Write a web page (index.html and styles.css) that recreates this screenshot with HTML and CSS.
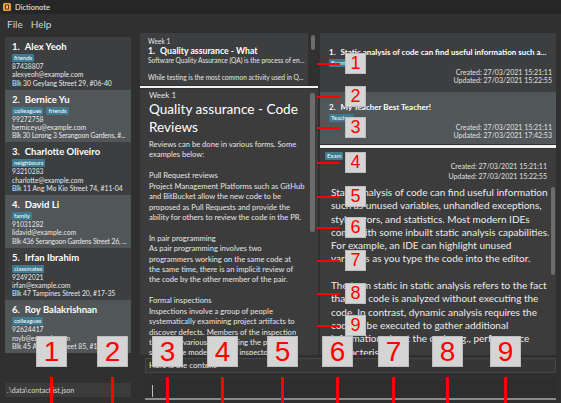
FILE: index.html
```html
<!DOCTYPE html>
<html>
<head>
<meta charset="utf-8">
<title>Dictionote</title>
<link rel="stylesheet" href="styles.css">
</head>
<body>
<div class="window">
  <header class="titlebar">
    <svg class="app-icon" width="8" height="8" viewBox="0 0 8 8"><rect x="0" y="0" width="8" height="8" rx="1.5" fill="#f0a030"/><rect x="2" y="1.5" width="4" height="5" rx="0.5" fill="#5a3a10"/><rect x="3" y="2.5" width="2" height="3" fill="#f0c060"/></svg>
    <span class="app-name">Dictionote</span>
  </header>
  <nav class="menubar"><span>File</span><span>Help</span></nav>
  <main class="main">
    <section class="contacts">
      <ul class="contact-list">
        <li class="contact">
          <div class="c-name"><span class="idx">1.</span>Alex Yeoh</div>
          <div class="tags"><span class="tag">friends</span></div>
          <div class="c-line">87438807</div>
          <div class="c-line">alexyeoh@example.com</div>
          <div class="c-line">Blk 30 Geylang Street 29, #06-40</div>
        </li>
        <li class="contact odd">
          <div class="c-name"><span class="idx">2.</span>Bernice Yu</div>
          <div class="tags"><span class="tag">colleagues</span><span class="tag">friends</span></div>
          <div class="c-line">99272758</div>
          <div class="c-line">berniceyu@example.com</div>
          <div class="c-line tight">Blk 30 Lorong 3 Serangoon Gardens, #...</div>
        </li>
        <li class="contact">
          <div class="c-name"><span class="idx">3.</span>Charlotte Oliveiro</div>
          <div class="tags"><span class="tag">neighbours</span></div>
          <div class="c-line">93210283</div>
          <div class="c-line">charlotte@example.com</div>
          <div class="c-line">Blk 11 Ang Mo Kio Street 74, #11-04</div>
        </li>
        <li class="contact odd">
          <div class="c-name"><span class="idx">4.</span>David Li</div>
          <div class="tags"><span class="tag">family</span></div>
          <div class="c-line">91031282</div>
          <div class="c-line">lidavid@example.com</div>
          <div class="c-line tight">Blk 436 Serangoon Gardens Street 26, ...</div>
        </li>
        <li class="contact">
          <div class="c-name"><span class="idx">5.</span>Irfan Ibrahim</div>
          <div class="tags"><span class="tag">classmates</span></div>
          <div class="c-line">92492021</div>
          <div class="c-line">irfan@example.com</div>
          <div class="c-line">Blk 47 Tampines Street 20, #17-35</div>
        </li>
        <li class="contact odd">
          <div class="c-name"><span class="idx">6.</span>Roy Balakrishnan</div>
          <div class="tags"><span class="tag">colleagues</span></div>
          <div class="c-line">92624417</div>
          <div class="c-line">royb@example.com</div>
          <div class="c-line">Blk 45 Aljunied Street 85, #11-31</div>
        </li>
      </ul>
      <div class="path">.\data\contactlist.json</div>
    </section>

    <section class="workspace">
      <div class="panes">
        <div class="notes-col">
          <div class="note-list">
            <div class="note-card">
              <div class="n-small">Week 1</div>
              <div class="n-title"><span class="idx">1.</span>Quality assurance - What</div>
              <div class="n-small">Software Quality Assurance (QA) is the process of en...</div>
              <div class="n-small">&nbsp;</div>
              <div class="n-small">While testing is the most common activity used in Q...</div>
            </div>
            <div class="scroll-track"><div class="thumb thumb-list"></div></div>
          </div>
          <div class="divider"></div>
          <div class="note-view">
            <div class="note-text">
              <div class="nv-week">Week 1</div>
              <h1 class="nv-title">Quality assurance - Code<br>Reviews</h1>
              <p class="nv-body">Reviews can be done in various forms. Some<br>examples below:<br><br>Pull Request reviews<br>Project Management Platforms such as GitHub<br>and BitBucket allow the new code to be<br>proposed as Pull Requests and provide the<br>ability for others to review the code in the PR.<br><br>In pair programming<br>As pair programming involves two<br>programmers working on the same code at<br>the same time, there is an implicit review of<br>the code by the other member of the pair.<br><br>Formal inspections<br>Inspections involve a group of people<br>systematically examining project artifacts to<br>discover defects. Members of the inspection<br>team play various roles during the process,<br>such as the moderator, the inspector, the</p>
            </div>
            <div class="scroll-track"><div class="thumb thumb-view"></div></div>
          </div>
        </div>

        <div class="detail-col">
          <div class="detail-list">
            <div class="d-card first">
              <div class="d-title"><span class="idx">1.</span>Static analysis of code can find useful information such a...</div>
              <div class="tags"><span class="tag">Exam</span></div>
              <div class="d-date">Created: 27/03/2021 15:21:11</div>
              <div class="d-date">Updated: 27/03/2021 15:22:55</div>
            </div>
            <div class="d-card odd">
              <div class="d-title"><span class="idx">2.</span>My Teacher Best Teacher!</div>
              <div class="tags"><span class="tag">Teacher</span></div>
              <div class="d-date">Created: 27/03/2021 15:21:11</div>
              <div class="d-date">Updated: 27/03/2021 17:42:53</div>
            </div>
          </div>
          <div class="divider thick"></div>
          <div class="detail-view">
            <div class="dv-head">
              <div class="tags"><span class="tag">Exam</span></div>
              <div class="dv-date">Created: 27/03/2021 15:21:11</div>
              <div class="dv-date">Updated: 27/03/2021 15:22:55</div>
            </div>
            <div class="dv-body">
              <p class="dv-text">Static analysis of code can find useful information<br>such as unused variables, unhandled exceptions,<br>style errors, and statistics. Most modern IDEs<br>come with some inbuilt static analysis capabilities.<br>For example, an IDE can highlight unused<br>variables as you type the code into the editor.<br><br>The term static in static analysis refers to the fact<br>that the code is analyzed without executing the<br>code. In contrast, dynamic analysis requires the<br>code to be executed to gather additional<br>information about the code e.g., performance<br>characteristics.</p>
              <div class="scroll-track slim"><div class="thumb thumb-detail"></div></div>
            </div>
          </div>
        </div>
      </div>
      <div class="result">Here is the content</div>
      <div class="command"><span class="caret"></span></div>
    </section>
  </main>

  <div class="marks">
    <div class="rmark r1"><span class="rline"></span><span class="rbox">1</span></div>
    <div class="rmark r2"><span class="rline"></span><span class="rbox">2</span></div>
    <div class="rmark r3"><span class="rline"></span><span class="rbox">3</span></div>
    <div class="rmark r4"><span class="rline"></span><span class="rbox">4</span></div>
    <div class="rmark r5"><span class="rline"></span><span class="rbox">5</span></div>
    <div class="rmark r6"><span class="rline"></span><span class="rbox">6</span></div>
    <div class="rmark r7"><span class="rline"></span><span class="rbox">7</span></div>
    <div class="rmark r8"><span class="rline"></span><span class="rbox">8</span></div>
    <div class="rmark r9"><span class="rline"></span><span class="rbox">9</span></div>

    <div class="bmark b1"><span class="bbox">1</span><span class="bline"></span></div>
    <div class="bmark b2"><span class="bbox">2</span><span class="bline"></span></div>
    <div class="bmark b3"><span class="bbox">3</span><span class="bline"></span></div>
    <div class="bmark b4"><span class="bbox">4</span><span class="bline"></span></div>
    <div class="bmark b5"><span class="bbox">5</span><span class="bline"></span></div>
    <div class="bmark b6"><span class="bbox">6</span><span class="bline"></span></div>
    <div class="bmark b7"><span class="bbox">7</span><span class="bline"></span></div>
    <div class="bmark b8"><span class="bbox">8</span><span class="bline"></span></div>
    <div class="bmark b9"><span class="bbox">9</span><span class="bline"></span></div>
  </div>
</div>
</body>
</html>
```

FILE: styles.css
```css
* { box-sizing: border-box; margin: 0; padding: 0; }
html, body { width: 561px; height: 403px; overflow: hidden; }
body {
  background: #303030;
  font-family: "Lato", "Open Sans", sans-serif;
  color: #e6e6e6;
}
.window { position: relative; width: 561px; height: 403px; }

.titlebar {
  height: 14px;
  background: #262626;
  display: flex;
  align-items: center;
  gap: 4px;
  padding-left: 3px;
  font-size: 7.5px;
  color: #f2f2f2;
}
.app-icon { display: block; }

.menubar {
  height: 19px;
  display: flex;
  align-items: center;
  gap: 8px;
  padding-left: 7px;
  font-size: 10px;
  color: #d0d0d0;
}

.main { display: flex; height: 370px; }

/* contacts */
.contacts {
  width: 131px;
  padding-left: 5px;
  padding-top: 4px;
  display: flex;
  flex-direction: column;
}
.contact-list { list-style: none; }
.contact {
  height: 52.67px;
  padding: 3px 2px 0 7px;
  background: #3c3e3f;
  overflow: hidden;
}
.contact.odd { background: #515658; }
.c-name {
  font-size: 9.5px;
  font-weight: 700;
  line-height: 13px;
  color: #ffffff;
  white-space: nowrap;
}
.idx { margin-right: 5px; }
.tags { display: flex; gap: 3px; margin-top: 1px; height: 8px; }
.tag {
  background: #3e7b91;
  color: #ffffff;
  font-size: 6px;
  line-height: 8px;
  padding: 0 2px;
  border-radius: 1px;
}
.c-line {
  font-size: 6.8px;
  line-height: 8.3px;
  white-space: nowrap;
  overflow: hidden;
  color: #e8e8e8;
}
.c-line.tight { letter-spacing: -0.15px; }
.path {
  margin-top: auto;
  margin-bottom: 6px;
  height: 14px;
  background: #3b3b3b;
  font-size: 7px;
  line-height: 14px;
  padding-left: 2px;
  color: #dcdcdc;
}

/* workspace */
.workspace {
  margin-left: 9px;
  width: 421px;
  display: flex;
  flex-direction: column;
}
.panes { display: flex; gap: 2px; height: 322px; }

.notes-col { width: 178px; display: flex; flex-direction: column; }
.note-list { display: flex; height: 52px; }
.note-card {
  width: 168px;
  background: #3c3e3f;
  padding: 3.75px 0 0 8px;
  overflow: hidden;
}
.n-small { font-size: 6.6px; line-height: 8.5px; white-space: nowrap; color: #e6e6e6; }
.n-title { font-size: 8.7px; font-weight: 700; line-height: 11px; white-space: nowrap; color: #fff; }
.scroll-track { width: 10px; flex: none; }
.thumb { background: #6c6c6c; border-radius: 2px; }
.thumb-list { margin: 2px 0 0 3px; width: 4px; height: 15px; }
.thumb-view { margin: 4px 0 0 2px; width: 5px; height: 139px; }

.divider { height: 2px; margin: 1px 0; background: #f2f2f2; flex: none; }
.divider.thick { height: 3px; margin: 1px 0 1px; }

.note-view {
  flex: 1;
  display: flex;
  background: #3c3c3c;
  overflow: hidden;
}
.note-text { flex: 1; padding: 1px 0 0 9px; overflow: hidden; }
.nv-week { font-size: 8px; line-height: 10px; color: #e6e6e6; }
.nv-title {
  font-size: 13.6px;
  font-weight: 400;
  line-height: 18px;
  color: #ffffff;
  white-space: nowrap;
}
.nv-body {
  margin-top: 3px;
  font-size: 7.6px;
  line-height: 10.42px;
  white-space: nowrap;
  color: #e6e6e6;
}

.detail-col { width: 236px; display: flex; flex-direction: column; }
.detail-list { padding-top: 4px; background: #3c3e3f; }
.d-card {
  height: 52px;
  padding: 9.5px 4px 0 9px;
  background: #3c3e3f;
}
.d-card.first { height: 55px; }
.d-card.odd { background: #515658; }
.d-title { font-size: 8px; font-weight: 700; line-height: 11px; white-space: nowrap; color: #fff; }
.d-card .tags { margin-top: 1.5px; }
.d-date { font-size: 7px; line-height: 8px; text-align: right; color: #e0e0e0; }
.d-card .tags + .d-date { margin-top: 1px; }

.detail-view {
  flex: 1;
  display: flex;
  flex-direction: column;
  background: #3c3c3c;
  overflow: hidden;
}
.dv-head { padding: 3px 9px 0 5px; }
.dv-head .tags { margin-top: 0; }
.dv-date { font-size: 7px; line-height: 10px; text-align: right; color: #e0e0e0; }
.dv-head .tags + .dv-date { margin-top: 1px; }
.dv-body { flex: 1; display: flex; overflow: hidden; }
.dv-text {
  flex: 1;
  padding: 5px 0 0 11px;
  font-size: 10px;
  line-height: 13.3px;
  white-space: nowrap;
  overflow: hidden;
  color: #ececec;
}
.scroll-track.slim { width: 7px; }
.thumb-detail { margin: 6px 0 0 2px; width: 4px; height: 88px; }

.result {
  margin: 3px 5px 0 5px;
  height: 15px;
  background: #363636;
  border: 1px solid #474747;
  font-size: 8px;
  line-height: 13px;
  padding-left: 3px;
  color: #e6e6e6;
}
.command {
  margin: 5px 5px 0 5px;
  height: 22px;
  background: #2e2e2e;
  border-bottom: 2px solid #8c8c8c;
  padding: 7px 0 0 7px;
}
.caret { display: block; width: 1px; height: 12px; background: #bdbdbd; }

/* annotation overlay */
.marks { position: absolute; left: 0; top: 0; width: 561px; height: 403px; pointer-events: none; }
.rmark {
  position: absolute;
  left: 317px;
  display: flex;
  align-items: center;
  gap: 5px;
  height: 21px;
}
.rline { width: 23px; height: 2px; background: #ff0000; }
.rbox {
  width: 21px; height: 21px;
  background: #d5d5d5;
  border: 1px solid #bdbdbd;
  color: #ff0000;
  font-family: "Liberation Sans", Arial, sans-serif;
  font-size: 18px;
  line-height: 19px;
  text-align: center;
}
.r1 { top: 53px; } .r2 { top: 86px; } .r3 { top: 117px; }
.r4 { top: 152px; } .r5 { top: 186px; } .r6 { top: 217px; }
.r7 { top: 250px; } .r8 { top: 283px; } .r9 { top: 315px; }

.bmark {
  position: absolute;
  top: 336px;
  display: flex;
  flex-direction: column;
  align-items: center;
  width: 31px;
}
.bbox {
  width: 31px; height: 31px;
  background: #d5d5d5;
  border: 1px solid #bdbdbd;
  color: #ff0000;
  font-family: "Liberation Sans", Arial, sans-serif;
  font-size: 28px;
  line-height: 29px;
  text-align: center;
}
.bline { width: 3px; height: 26px; margin-top: 10px; background: #ff0000; }
.b1 { left: 36px; } .b2 { left: 97px; } .b3 { left: 152px; }
.b4 { left: 207px; } .b5 { left: 267px; } .b6 { left: 322px; }
.b7 { left: 378px; } .b8 { left: 432px; } .b9 { left: 490px; }
```
